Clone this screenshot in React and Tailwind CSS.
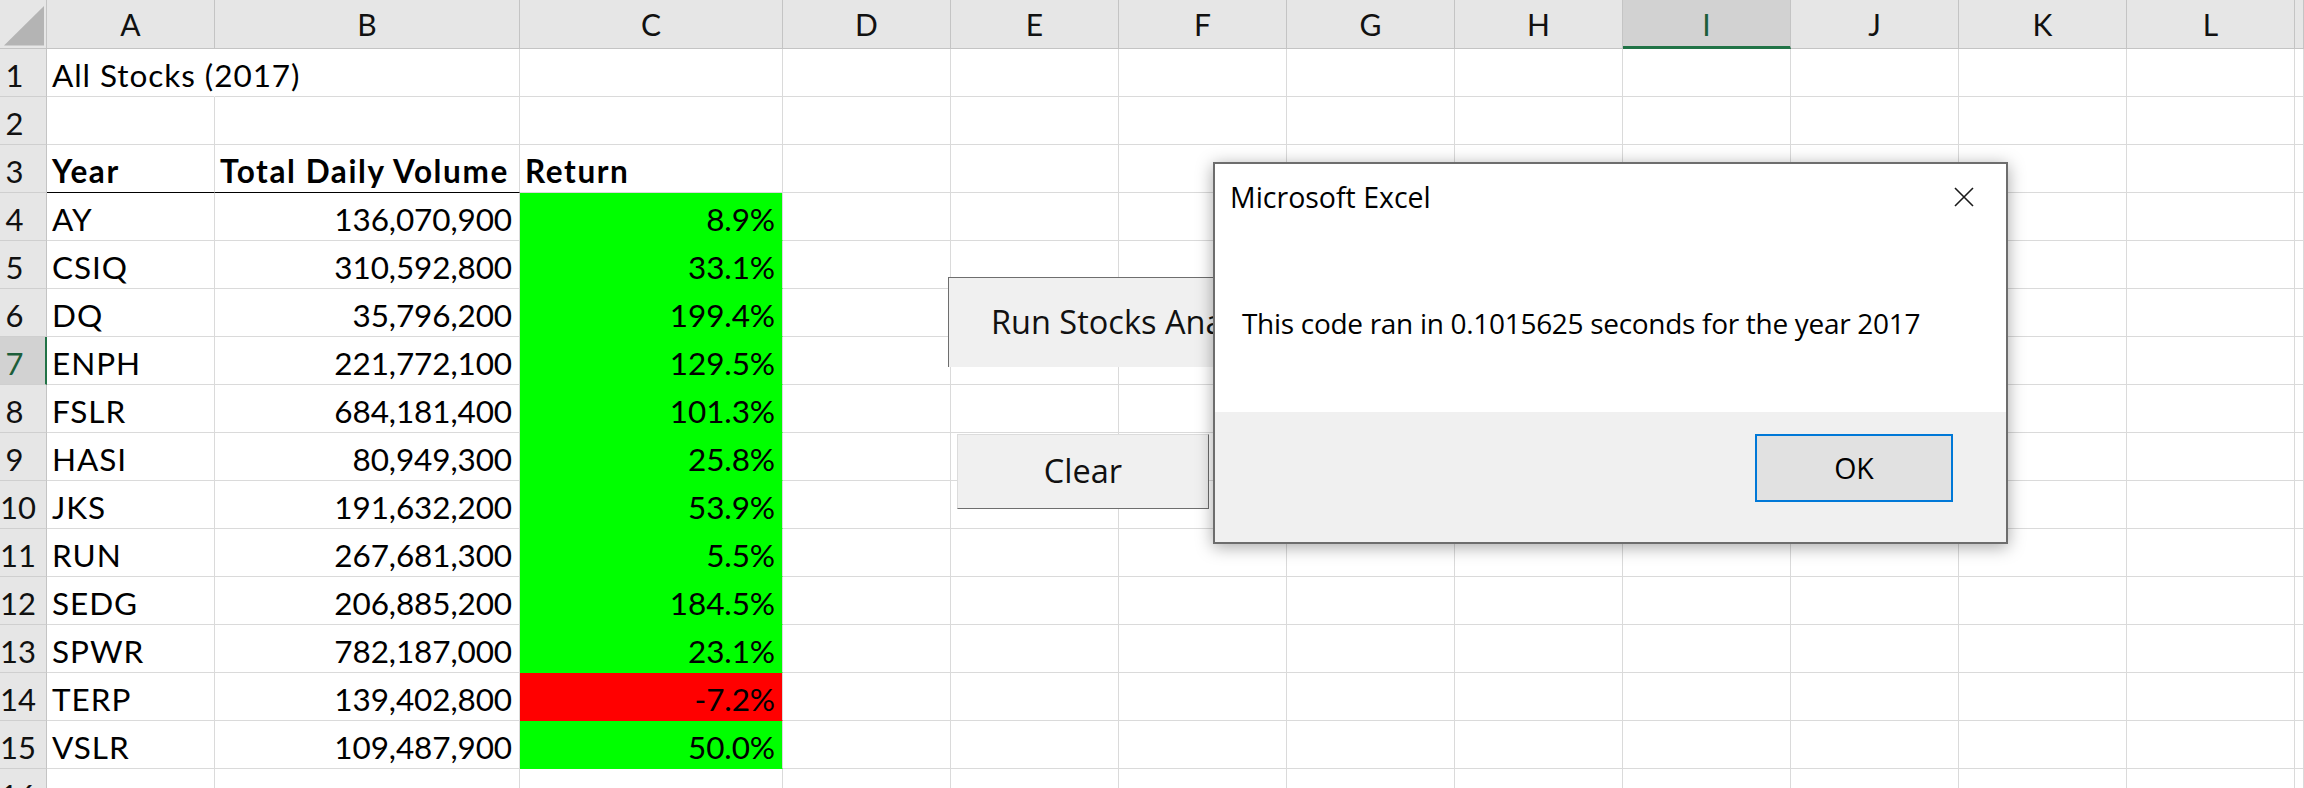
import React from 'react';

const COLS = ['A', 'B', 'C', 'D', 'E', 'F', 'G', 'H', 'I', 'J', 'K', 'L', ''];

const STOCKS = [
  ['AY', '136,070,900', '8.9%'],
  ['CSIQ', '310,592,800', '33.1%'],
  ['DQ', '35,796,200', '199.4%'],
  ['ENPH', '221,772,100', '129.5%'],
  ['FSLR', '684,181,400', '101.3%'],
  ['HASI', '80,949,300', '25.8%'],
  ['JKS', '191,632,200', '53.9%'],
  ['RUN', '267,681,300', '5.5%'],
  ['SEDG', '206,885,200', '184.5%'],
  ['SPWR', '782,187,000', '23.1%'],
  ['TERP', '139,402,800', '-7.2%'],
  ['VSLR', '109,487,900', '50.0%'],
];

const SELECTED_COL = 8; // I
const SELECTED_ROW = 7;

const cellFont = { fontFamily: 'Lato, "Liberation Sans", sans-serif' };
const uiFont = { fontFamily: '"Open Sans", "Noto Sans", sans-serif' };

// what goes in a cell, by row and column index (col 0 = A)
const getCell = (row, col) => {
  if (row === 1 && col === 0) return { text: 'All Stocks (2017)', overflow: true };
  if (row === 3 && col < 3) {
    return { text: ['Year', 'Total Daily Volume', 'Return'][col], bold: true, underline: col < 2 };
  }
  const s = STOCKS[row - 4];
  if (!s || col > 2) return null;
  if (col === 0) return { text: s[0] };
  if (col === 1) return { text: s[1], right: true };
  const neg = s[2].startsWith('-');
  return { text: s[2], right: true, fill: neg ? 'red' : 'green' };
};

const ColumnHeader = ({ label, index }) => {
  const selected = index === SELECTED_COL;
  return (
    <div
      className={`flex justify-center pt-[2px] text-[30px] leading-[45px] border-r border-[#c4c4c4] ${
        selected
          ? 'bg-[#d2d2d2] border-b-[3px] border-b-[#217346] text-[#1d5e3a]'
          : 'bg-[#e6e6e6] border-b border-b-[#c4c4c4] text-[#111]'
      }`}
      style={cellFont}
    >
      {label}
    </div>
  );
};

const RowHeader = ({ n }) => {
  const selected = n === SELECTED_ROW;
  return (
    <div
      className={`border-b border-[#cfcfcf] ${
        selected
          ? 'bg-[#d2d2d2] border-r-2 border-r-[#217346] text-[#1d5e3a]'
          : 'bg-[#e6e6e6] border-r border-r-[#c4c4c4] text-[#111]'
      }`}
      style={cellFont}
    >
      <div className="w-[29px] text-center pt-[4px] text-[31px] leading-[44px]">{n}</div>
    </div>
  );
};

const Cell = ({ row, col }) => {
  const c = getCell(row, col);
  let cls = 'relative border-r border-b border-[#dadada] pt-[4px] text-[31.5px] leading-[44px] whitespace-nowrap text-black';
  if (c?.fill === 'green') cls += ' bg-[#00ff00] border-b-[#00ff00]';
  if (c?.fill === 'red') cls += ' bg-[#ff0000] border-b-[#ff0000]';
  if (c?.underline) cls += ' border-b-black';
  if (c?.overflow) cls += ' border-r-transparent overflow-visible z-10';
  else cls += ' overflow-hidden';
  if (c?.right) cls += ' text-right pr-[7px] tracking-[-0.1px]';
  else if (c?.bold) cls += ' pl-[5px] font-bold tracking-[1.6px]';
  else cls += ' pl-[5px] tracking-[0.95px]';
  return (
    <div className={cls} style={cellFont}>
      {c?.text}
    </div>
  );
};

const SheetButton = ({ className, children }) => (
  <div
    className={`absolute flex items-center bg-[#f0f0f0] text-[32.5px] text-[#111] whitespace-nowrap overflow-hidden ${className}`}
    style={uiFont}
  >
    {children}
  </div>
);

const MessageBox = () => (
  <div
    className="absolute left-[1213px] top-[162px] w-[795px] h-[382px] z-30 flex flex-col bg-white border-2 border-[#6d6d6d] shadow-[0_3px_16px_rgba(0,0,0,0.35)]"
    style={uiFont}
  >
    <div className="flex items-center justify-between pl-[15px] pr-[32px] pt-[13px]">
      <span className="text-[28.5px] leading-[40px] text-black">Microsoft Excel</span>
      <svg width="20" height="20" viewBox="0 0 20 20">
        <path d="M1 1 L19 19 M19 1 L1 19" stroke="#1a1a1a" strokeWidth="1.6" fill="none" />
      </svg>
    </div>
    <div className="mt-[86px] pl-[27px] text-[28px] leading-[40px] tracking-[-0.3px] text-black whitespace-nowrap">
      This code ran in 0.1015625 seconds for the year 2017
    </div>
    <div className="mt-auto h-[130px] bg-[#f0f0f0] flex justify-end items-start pt-[22px] pr-[53px]">
      <div className="w-[198px] h-[68px] border-2 border-[#0078d7] bg-[#e1e1e1] flex items-center justify-center text-[28.5px] text-black">
        OK
      </div>
    </div>
  </div>
);

export default function App() {
  const rows = Array.from({ length: 16 }, (_, i) => i + 1);
  return (
    <div className="relative w-[2304px] h-[788px] overflow-hidden bg-white">
      <div className="grid grid-cols-[47px_168px_305px_263px_repeat(9,168px)_1fr] grid-rows-[49px_repeat(16,48px)]">
        {/* corner */}
        <div className="relative bg-[#e6e6e6] border-r border-b border-[#c4c4c4]">
          <svg className="absolute left-[4px] top-[6px]" width="40" height="40" viewBox="0 0 40 40">
            <polygon points="0,39.5 40,0 40,39.5" fill="#b4b4b4" />
          </svg>
        </div>
        {COLS.map((c, i) => (
          <ColumnHeader key={'h' + i} label={c} index={i} />
        ))}
        {rows.map((r) => (
          <React.Fragment key={r}>
            <RowHeader n={r} />
            {COLS.map((_, ci) => (
              <Cell key={ci} row={r} col={ci} />
            ))}
          </React.Fragment>
        ))}
      </div>

      <SheetButton className="left-[948px] top-[277px] w-[360px] h-[90px] pl-[42px] border-t border-l border-[#6e6e6e] z-20">
        Run Stocks Analysis
      </SheetButton>
      <SheetButton className="left-[957px] top-[434px] w-[252px] h-[75px] justify-center border border-[#dcdcdc] border-r-[#6e6e6e] border-b-[#6e6e6e] z-20">
        Clear
      </SheetButton>

      <MessageBox />
    </div>
  );
}
